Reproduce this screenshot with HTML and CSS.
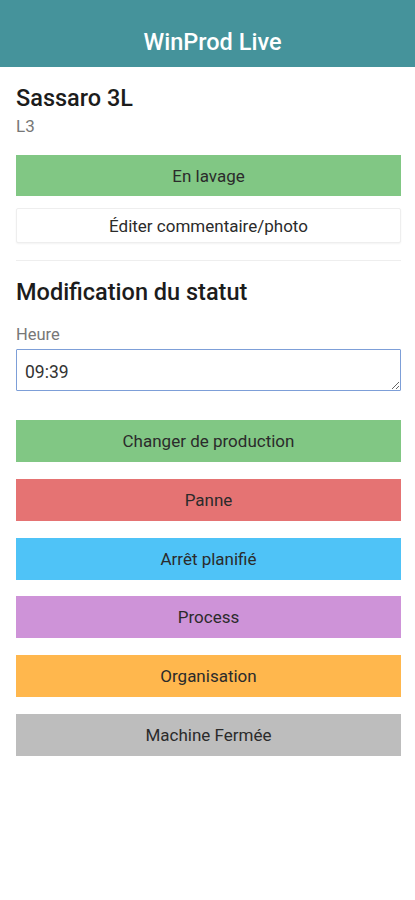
FILE: index.html
```html
<!DOCTYPE html>
<html lang="fr">
<head>
    <meta charset="UTF-8">
    <meta name="viewport" content="width=device-width, initial-scale=1.0">
    <title>WinProd Live</title>
    <link rel="stylesheet" href="styles.css">
</head>
<body>
    <header class="topbar">
        <h1>WinProd Live</h1>
    </header>

    <main class="page">
        <!-- Machine courante -->
        <section class="machine">
            <h2 class="machine-name">Sassaro 3L</h2>
            <div class="machine-line">L3</div>
            <button class="btn btn-green current">En lavage</button>
            <button class="btn btn-outline">Éditer commentaire/photo</button>
        </section>

        <hr class="sep">

        <!-- Changement de statut -->
        <section class="status">
            <h2 class="section-title">Modification du statut</h2>
            <label class="field-label" for="heure">Heure</label>
            <textarea id="heure" class="time-input" rows="1">09:39</textarea>

            <div class="status-list">
                <button class="btn btn-green">Changer de production</button>
                <button class="btn btn-red">Panne</button>
                <button class="btn btn-blue">Arrêt planifié</button>
                <button class="btn btn-purple">Process</button>
                <button class="btn btn-orange">Organisation</button>
                <button class="btn btn-grey">Machine Fermée</button>
            </div>
        </section>
    </main>
</body>
</html>
```

FILE: styles.css
```css
/* Base */
body {
    font-family: Roboto, 'Liberation Sans', sans-serif;
    background-color: #fff;
    color: #222;
    margin: 0;
    padding: 0;
}

.topbar {
    background-color: #45939b;
    height: 67px;
    display: flex;
    align-items: center;
    justify-content: center;
    padding: 16px 0 0 10px;
    box-sizing: border-box;
}

.topbar h1 {
    margin: 0;
    color: #fff;
    font-size: 23.5px;
    font-weight: 500;
    line-height: 28px;
}

.page {
    padding: 17px 14px 0 16px;
}

.machine-name {
    margin: 0;
    font-size: 23.5px;
    font-weight: 500;
    line-height: 28px;
    color: #1c1c1c;
}

.machine-line {
    margin-top: 4px;
    font-size: 17px;
    color: #777;
    line-height: 20px;
}

/* Buttons */
.btn {
    display: block;
    width: 100%;
    height: 42px;
    border: none;
    font-family: inherit;
    font-size: 17px;
    color: #2b2b2b;
    cursor: pointer;
    padding: 0;
}

.current {
    margin-top: 19px;
    height: 41px;
}

.btn-outline {
    margin-top: 12px;
    height: 35px;
    background-color: #fff;
    border: 1px solid #eee;
    border-radius: 2px;
    box-shadow: 0 1px 2px rgba(0, 0, 0, 0.05);
}

.btn-green { background-color: #81c784; }
.btn-red { background-color: #e57373; }
.btn-blue { background-color: #4fc3f7; }
.btn-purple { background-color: #ce93d8; }
.btn-orange { background-color: #ffb74d; }
.btn-grey { background-color: #bdbdbd; }

.sep {
    border: none;
    border-top: 1px solid #eee;
    margin: 17px 0 0;
}

.section-title {
    margin: 17px 0 0;
    font-size: 23.5px;
    font-weight: 500;
    line-height: 28px;
    color: #1c1c1c;
}

.field-label {
    display: block;
    margin-top: 19px;
    font-size: 16.5px;
    color: #777;
    line-height: 20px;
}

.time-input {
    display: block;
    width: 100%;
    height: 42px;
    box-sizing: border-box;
    margin-top: 4px;
    padding: 12px 8px 8px;
    border: 1px solid #7d9fd8;
    border-radius: 1px;
    font-family: inherit;
    font-size: 17.5px;
    line-height: 20px;
    color: #333;
    resize: vertical;
    outline: none;
}

.status-list {
    margin-top: 29px;
    display: flex;
    flex-direction: column;
    gap: 16.8px;
}
```
